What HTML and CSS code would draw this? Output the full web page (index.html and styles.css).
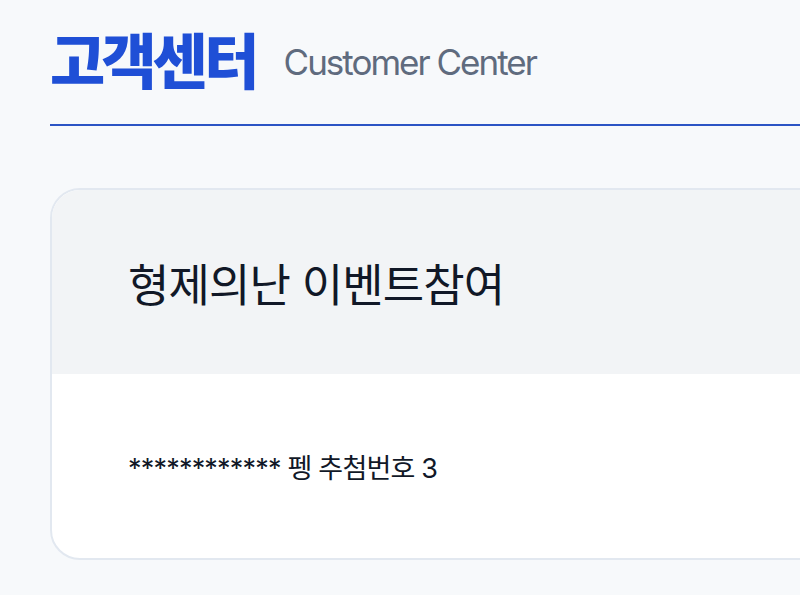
FILE: index.html
```html
<!DOCTYPE html>
<html lang="ko">
<head>
    <meta charset="UTF-8">
    <meta name="viewport" content="width=device-width, initial-scale=1.0">
    <title>고객센터</title>
    <link rel="stylesheet" href="styles.css">
</head>
<body>
    <div class="page">
        <header class="page-header">
            <h1 class="page-title">고객센터</h1>
            <span class="page-subtitle">Customer Center</span>
        </header>

        <div class="card">
            <div class="card-head">
                <h2 class="card-title">형제의난 이벤트참여</h2>
            </div>
            <div class="card-body">
                <p class="entry">************ 펭 추첨번호 3</p>
            </div>
        </div>
    </div>
</body>
</html>
```

FILE: styles.css
```css
html, body {
    overflow: hidden;
}

body {
    font-family: Inter, "Noto Sans CJK KR", sans-serif;
    background-color: #f7f9fb;
    color: #111827;
    margin: 0;
    padding: 0;
}

.page {
    padding: 26px 0 0 50px;
    width: 800px;
}

.page-header {
    display: flex;
    align-items: center;
    gap: 28px;
    padding-bottom: 26px;
    border-bottom: 2px solid #2b54c4;
    margin-right: -40px;
}

.page-title {
    margin: 0;
    font-size: 60px;
    line-height: 72px;
    font-weight: 800;
    letter-spacing: -3.8px;
    color: #1f4fd6;
}

.page-subtitle {
    font-size: 35px;
    line-height: 72px;
    letter-spacing: -2px;
    color: #5f6b7e;
}

.card {
    margin-top: 62px;
    margin-right: -60px;
    border: 2px solid #e2e8f0;
    border-radius: 30px;
    overflow: hidden;
    background-color: #ffffff;
}

.card-head {
    background-color: #f2f4f6;
    height: 184px;
    display: flex;
    align-items: center;
    padding-left: 76px;
}

.card-title {
    margin: 0;
    font-size: 45px;
    font-weight: 400;
    letter-spacing: -0.9px;
    color: #111827;
}

.card-body {
    height: 184px;
    display: flex;
    align-items: center;
    padding-left: 76px;
}

.entry {
    margin: 0;
    font-size: 27px;
    letter-spacing: -0.8px;
    color: #111827;
}
```
